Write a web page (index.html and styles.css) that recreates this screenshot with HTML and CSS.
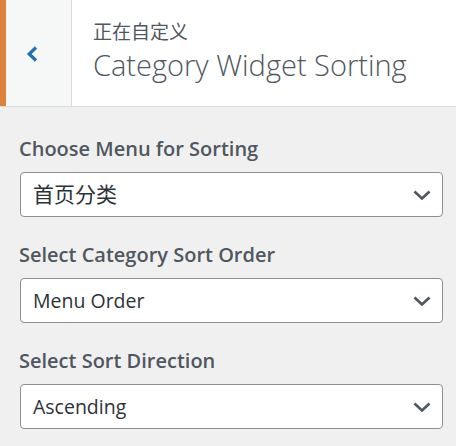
FILE: index.html
```html
<!DOCTYPE html>
<html lang="zh-CN">
    <head>
        <meta charset="UTF-8" />
        <meta name="viewport" content="width=device-width, initial-scale=1.0" />
        <title>Category Widget Sorting</title>
        <link rel="stylesheet" href="styles.css">
    </head>
    <body>
        <!--Section Header-->
        <header class="section-head">
            <div class="accent"></div>
            <button class="back" aria-label="Back">
                <svg width="12" height="16" viewBox="0 0 12 16"><path d="M10 1.5 L3.2 8 L10 14.5" fill="none" stroke="#2271b1" stroke-width="3.2"/></svg>
            </button>
            <div class="titles">
                <span class="pre-title">正在自定义</span>
                <h3 class="section-title">Category Widget Sorting</h3>
            </div>
        </header>

        <!--Controls-->
        <main class="controls">
            <div class="control">
                <label class="control-label">Choose Menu for Sorting</label>
                <div class="select cjk">首页分类</div>
            </div>
            <div class="control">
                <label class="control-label">Select Category Sort Order</label>
                <div class="select">Menu Order</div>
            </div>
            <div class="control">
                <label class="control-label">Select Sort Direction</label>
                <div class="select">Ascending</div>
            </div>
        </main>
    </body>
</html>
```

FILE: styles.css
```css
:root {
    --orange: #dd823b;
    --blue: #2271b1;
    --text: #50575e;
    --dark: #2c3338;
    --border: #dcdcde;
    --bg: #f0f0f1;
}
body {
    margin: 0;
    background-color: var(--bg);
    font-family: "Open Sans", "Noto Sans CJK SC", sans-serif;
    color: var(--text);
}
.section-head {
    display: flex;
    height: 106px;
    background-color: white;
    border-bottom: 1px solid var(--border);
}
.accent {
    width: 6px;
    background-color: var(--orange);
}
.back {
    width: 66px;
    padding: 0;
    border: 0;
    border-right: 1px solid var(--border);
    background-color: #f6f7f7;
    display: flex;
    align-items: center;
    justify-content: center;
}
.back svg {
    margin-right: 13px;
    margin-top: 1px;
}
.titles {
    display: flex;
    flex-direction: column;
    justify-content: center;
    padding-left: 21px;
    padding-bottom: 4px;
}
.pre-title {
    font-size: 19px;
    line-height: 24px;
    font-family: "Noto Sans CJK SC", sans-serif;
}
.section-title {
    margin: 4px 0 0;
    font-size: 29px;
    font-weight: 300;
    line-height: 36px;
}
.controls {
    padding: 29px 13px 0 20px;
}
.control {
    margin-bottom: 25px;
}
.control-label {
    display: block;
    font-size: 20px;
    font-weight: 600;
    line-height: 26px;
    margin-bottom: 10px;
    margin-left: -1px;
}
.select {
    height: 43px;
    border: 1px solid #8c8f94;
    border-radius: 4px;
    background-color: white;
    color: var(--dark);
    font-size: 19.5px;
    line-height: 43px;
    padding-left: 12px;
    background-image: url("data:image/svg+xml,%3Csvg xmlns='http://www.w3.org/2000/svg' width='18' height='10' viewBox='0 0 18 10'%3E%3Cpath d='M1.5 1.5 L9 8.5 L16.5 1.5' fill='none' stroke='%2350575e' stroke-width='2.6'/%3E%3C/svg%3E");
    background-repeat: no-repeat;
    background-position: right 11px center;
}
.select.cjk {
    font-size: 21px;
}
```
